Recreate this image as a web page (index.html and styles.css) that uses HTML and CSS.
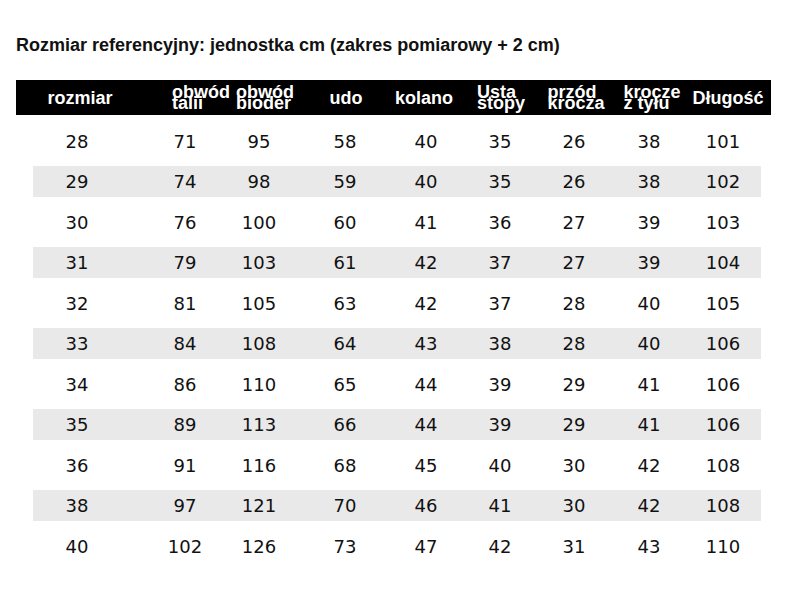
FILE: index.html
```html
<!DOCTYPE html>
<html lang="pl">
<head>
<meta charset="utf-8">
<title>Rozmiar referencyjny</title>
<link rel="stylesheet" href="styles.css">
</head>
<body>
<h1 class="title">Rozmiar referencyjny: jednostka cm (zakres pomiarowy + 2 cm)</h1>
<div class="head">
  <div class="hc"><span class="lbl">rozmiar</span></div>
  <div class="hc"><span class="lbl two">obwód<br>talii</span></div>
  <div class="hc"><span class="lbl two">obwód<br>bioder</span></div>
  <div class="hc"><span class="lbl">udo</span></div>
  <div class="hc"><span class="lbl">kolano</span></div>
  <div class="hc"><span class="lbl two">Usta<br>stopy</span></div>
  <div class="hc"><span class="lbl two">przód<br>krocza</span></div>
  <div class="hc"><span class="lbl two">krocze<br>z tyłu</span></div>
  <div class="hc"><span class="lbl">Długość</span></div>
</div>
<div class="body">
  <div class="row"><span>28</span><span>71</span><span>95</span><span>58</span><span>40</span><span>35</span><span>26</span><span>38</span><span>101</span></div>
  <div class="row"><span>29</span><span>74</span><span>98</span><span>59</span><span>40</span><span>35</span><span>26</span><span>38</span><span>102</span></div>
  <div class="row"><span>30</span><span>76</span><span>100</span><span>60</span><span>41</span><span>36</span><span>27</span><span>39</span><span>103</span></div>
  <div class="row"><span>31</span><span>79</span><span>103</span><span>61</span><span>42</span><span>37</span><span>27</span><span>39</span><span>104</span></div>
  <div class="row"><span>32</span><span>81</span><span>105</span><span>63</span><span>42</span><span>37</span><span>28</span><span>40</span><span>105</span></div>
  <div class="row"><span>33</span><span>84</span><span>108</span><span>64</span><span>43</span><span>38</span><span>28</span><span>40</span><span>106</span></div>
  <div class="row"><span>34</span><span>86</span><span>110</span><span>65</span><span>44</span><span>39</span><span>29</span><span>41</span><span>106</span></div>
  <div class="row"><span>35</span><span>89</span><span>113</span><span>66</span><span>44</span><span>39</span><span>29</span><span>41</span><span>106</span></div>
  <div class="row"><span>36</span><span>91</span><span>116</span><span>68</span><span>45</span><span>40</span><span>30</span><span>42</span><span>108</span></div>
  <div class="row"><span>38</span><span>97</span><span>121</span><span>70</span><span>46</span><span>41</span><span>30</span><span>42</span><span>108</span></div>
  <div class="row"><span>40</span><span>102</span><span>126</span><span>73</span><span>47</span><span>42</span><span>31</span><span>43</span><span>110</span></div>
</div>
</body>
</html>
```
FILE: styles.css
```css
html, body {
  margin: 0;
  padding: 0;
  background: #fff;
}
body {
  width: 790px;
  height: 589px;
  overflow: hidden;
}
.title {
  margin: 35px 0 0 16px;
  height: 20px;
  line-height: 20px;
  font-family: "Liberation Sans", Arial, sans-serif;
  font-weight: bold;
  font-size: 18px;
  color: #111;
}
.head {
  margin: 25px 19px 0 16px;
  height: 35px;
  background: #000;
  display: grid;
  grid-template-columns: 34px 60px 61px 60px 4px 60px 21px 60px 18px 60px 17px 60px 15px 60px 16px 60px 16px 60px;
  align-items: center;
  font-family: "Liberation Sans", Arial, sans-serif;
  font-weight: bold;
  font-size: 18px;
  color: #fff;
}
.hc {
  display: flex;
  justify-content: center;
  align-items: center;
  height: 35px;
  white-space: nowrap;
}
.lbl {
  display: block;
  padding-top: 2px;
}
.lbl.two {
  line-height: 11px;
  text-align: left;
  padding-top: 0;
}
.head > :nth-child(1), .row > :nth-child(1) { grid-column: 2; }
.head > :nth-child(2), .row > :nth-child(2) { grid-column: 4; }
.head > :nth-child(3), .row > :nth-child(3) { grid-column: 6; }
.head > :nth-child(4), .row > :nth-child(4) { grid-column: 8; }
.head > :nth-child(5), .row > :nth-child(5) { grid-column: 10; }
.head > :nth-child(6), .row > :nth-child(6) { grid-column: 12; }
.head > :nth-child(7), .row > :nth-child(7) { grid-column: 14; }
.head > :nth-child(8), .row > :nth-child(8) { grid-column: 16; }
.head > :nth-child(9), .row > :nth-child(9) { grid-column: 18; }
.body {
  margin: 10.5px 29px 0 33px;
  display: flex;
  flex-direction: column;
  gap: 9.5px;
}
.row {
  height: 31px;
  display: grid;
  grid-template-columns: 14px 60px 48px 60px 14px 60px 26px 60px 21px 60px 14px 60px 14px 60px 15px 60px 14px 60px;
  align-items: center;
  font-family: "DejaVu Sans", Verdana, sans-serif;
  font-size: 18px;
  color: #111;
}
.row:nth-child(even) {
  background: #e9e9e9;
}
.row > span {
  display: flex;
  justify-content: center;
  white-space: nowrap;
}
```
